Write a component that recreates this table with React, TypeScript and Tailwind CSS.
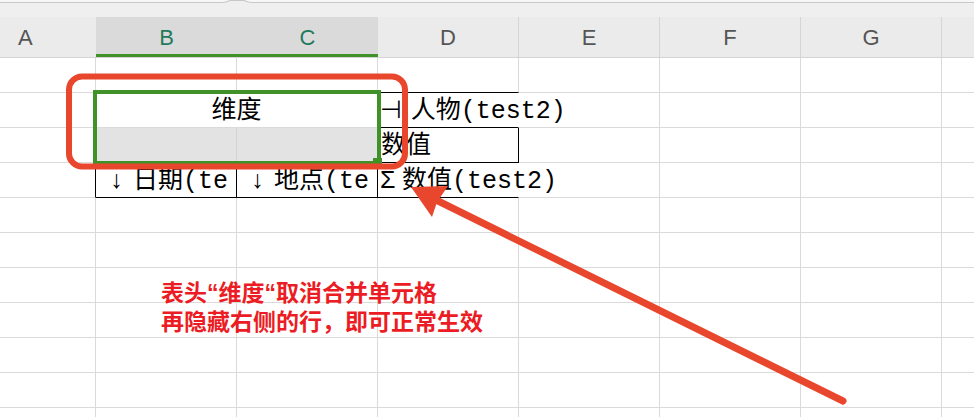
import React from "react";

const cellFont =
  "font-['Liberation_Mono','Noto_Sans_CJK_SC','DejaVu_Sans',monospace] text-[25px] text-black leading-none";

function EmptyRow() {
  return (
    <div className="flex h-[35px] shrink-0">
      <div className="w-[96px] shrink-0 border-r border-b border-[#dadada]" />
      <div className="w-[141px] shrink-0 border-r border-b border-[#dadada]" />
      <div className="w-[141px] shrink-0 border-r border-b border-[#dadada]" />
      <div className="w-[141px] shrink-0 border-r border-b border-[#dadada]" />
      <div className="w-[141px] shrink-0 border-r border-b border-[#dadada]" />
      <div className="w-[141px] shrink-0 border-r border-b border-[#dadada]" />
      <div className="w-[141px] shrink-0 border-r border-b border-[#dadada]" />
      <div className="flex-1 border-b border-[#dadada]" />
    </div>
  );
}

function TailCells() {
  return (
    <>
      <div className="w-[141px] shrink-0 border-r border-b border-[#dadada]" />
      <div className="w-[141px] shrink-0 border-r border-b border-[#dadada]" />
      <div className="w-[141px] shrink-0 border-r border-b border-[#dadada]" />
      <div className="flex-1 border-b border-[#dadada]" />
    </>
  );
}

export default function App() {
  return (
    <div className="relative w-[974px] h-[417px] overflow-hidden bg-white font-['Liberation_Sans',sans-serif]">
      {/* top strip */}
      <div className="h-[17px] bg-[#efefef]">
        <svg width="974" height="17" className="block">
          <path d="M0 0 H974 V2.5 H252 Q248 2.5 244 0 H230 Q226 2.5 222 2.5 H0 Z" fill="#f7f7f7" />
          <path d="M0 2.5 H222 Q226 2.5 230 0.5 H244 Q248 2.5 252 2.5 H974" stroke="#c8c8c8" strokeWidth="1.2" fill="none" />
        </svg>
      </div>

      {/* column header */}
      <div className="flex h-[41px] border-b border-[#d4d4d4] bg-[#ebebeb] text-[22px]">
        <div className="w-[96px] shrink-0 flex items-center pl-[18px] text-[#555]">A</div>
        <div className="w-[141px] shrink-0 flex items-center justify-center bg-[#dadada] text-[#1f7a5c] shadow-[inset_0_-3px_0_#3f9128]">B</div>
        <div className="w-[141px] shrink-0 flex items-center justify-center bg-[#dadada] text-[#1f7a5c] shadow-[inset_0_-3px_0_#3f9128]">C</div>
        <div className="w-[141px] shrink-0 flex items-center justify-center border-r border-[#d5d5d5] text-[#555]">D</div>
        <div className="w-[141px] shrink-0 flex items-center justify-center border-r border-[#d5d5d5] text-[#555]">E</div>
        <div className="w-[141px] shrink-0 flex items-center justify-center border-r border-[#d5d5d5] text-[#555]">F</div>
        <div className="w-[141px] shrink-0 flex items-center justify-center border-r border-[#d5d5d5] text-[#555]">G</div>
        <div className="flex-1" />
      </div>

      {/* body */}
      <div className="flex flex-col">
        {/* row 1 */}
        <div className="flex h-[35px] shrink-0">
          <div className="w-[96px] shrink-0 border-r border-b border-[#dadada]" />
          <div className="w-[141px] shrink-0 border-r border-b border-[#dadada]" />
          <div className="w-[141px] shrink-0 border-r border-b border-[#dadada]" />
          <div className="w-[141px] shrink-0 border-r border-b border-[#dadada] border-b-black" />
          <TailCells />
        </div>

        {/* row 2 */}
        <div className="flex h-[35px] shrink-0">
          <div className="w-[96px] shrink-0 border-r border-b border-[#dadada]" />
          <div className={`w-[282px] shrink-0 border-r border-b border-[#dadada] flex items-center justify-center pt-[2px] ${cellFont}`}>
            维度
          </div>
          <div className={`w-[141px] shrink-0 border-r border-b border-[#dadada] border-r-transparent border-b-black flex items-center pl-[2px] pt-[2px] whitespace-nowrap ${cellFont}`}>
            <span className="inline-block w-[25px] text-center">⊣</span>
            <span className="ml-[9px]">人物(test2)</span>
          </div>
          <TailCells />
        </div>

        {/* row 3 */}
        <div className="flex h-[35px] shrink-0">
          <div className="w-[96px] shrink-0 border-r border-b border-[#dadada]" />
          <div className="w-[141px] shrink-0 border-r border-b border-[#d2d2d2] bg-[#e3e3e3]" />
          <div className="w-[141px] shrink-0 border-r border-b border-[#d2d2d2] bg-[#e3e3e3]" />
          <div className={`w-[141px] shrink-0 border-r border-b border-black flex items-center pl-[3px] pt-[2px] whitespace-nowrap ${cellFont}`}>
            数值
          </div>
          <TailCells />
        </div>

        {/* row 4 */}
        <div className="flex h-[35px] shrink-0">
          <div className="w-[96px] shrink-0 border-r border-b border-[#dadada] border-r-black" />
          <div className={`w-[141px] shrink-0 border-r border-b border-black flex items-center pl-[8px] pt-[2px] whitespace-nowrap overflow-hidden ${cellFont}`}>
            <span className="inline-block w-[25px] shrink-0 text-center">↓</span>
            <span className="ml-[4px]">日期(te</span>
          </div>
          <div className={`w-[141px] shrink-0 border-r border-b border-black flex items-center pl-[8px] pt-[2px] whitespace-nowrap overflow-hidden ${cellFont}`}>
            <span className="inline-block w-[25px] shrink-0 text-center">↓</span>
            <span className="ml-[4px]">地点(te</span>
          </div>
          <div className={`w-[141px] shrink-0 border-r border-b border-[#dadada] border-r-transparent border-b-black flex items-center pl-[2px] pt-[2px] whitespace-nowrap ${cellFont}`}>
            <span className="inline-block w-[25px] text-center">Σ</span>
            <span className="ml-[7px]">数值(test2)</span>
          </div>
          <TailCells />
        </div>

        <EmptyRow />
        <EmptyRow />
        <EmptyRow />
        <EmptyRow />
        <EmptyRow />
        <EmptyRow />
        <EmptyRow />
      </div>

      {/* selection border */}
      <div className="absolute left-[93px] top-[90px] w-[288px] h-[75px] border-[4px] border-[#3f9128]">
        <div className="absolute -right-[5px] -bottom-[6px] w-[9px] h-[9px] bg-[#3f9128]" />
      </div>

      {/* annotations */}
      <svg className="absolute left-0 top-0 pointer-events-none" width="974" height="417">
        <rect x="69" y="76.5" width="336" height="90" rx="13" fill="none" stroke="#e9472d" strokeWidth="6" />
        <line x1="843" y1="401" x2="432" y2="198" stroke="#e9472d" strokeWidth="7" strokeLinecap="round" />
        <path d="M411 187 L448 186 L437 202 L432 217 Z" fill="#e9472d" />
      </svg>

      <div className="absolute left-[161px] top-[279px] text-[23px] leading-[29px] font-bold text-[#ec1c24] font-['Liberation_Sans','Noto_Sans_CJK_SC',sans-serif] whitespace-nowrap">
        <div>表头“维度“取消合并单元格</div>
        <div>再隐藏右侧的行，即可正常生效</div>
      </div>
    </div>
  );
}
